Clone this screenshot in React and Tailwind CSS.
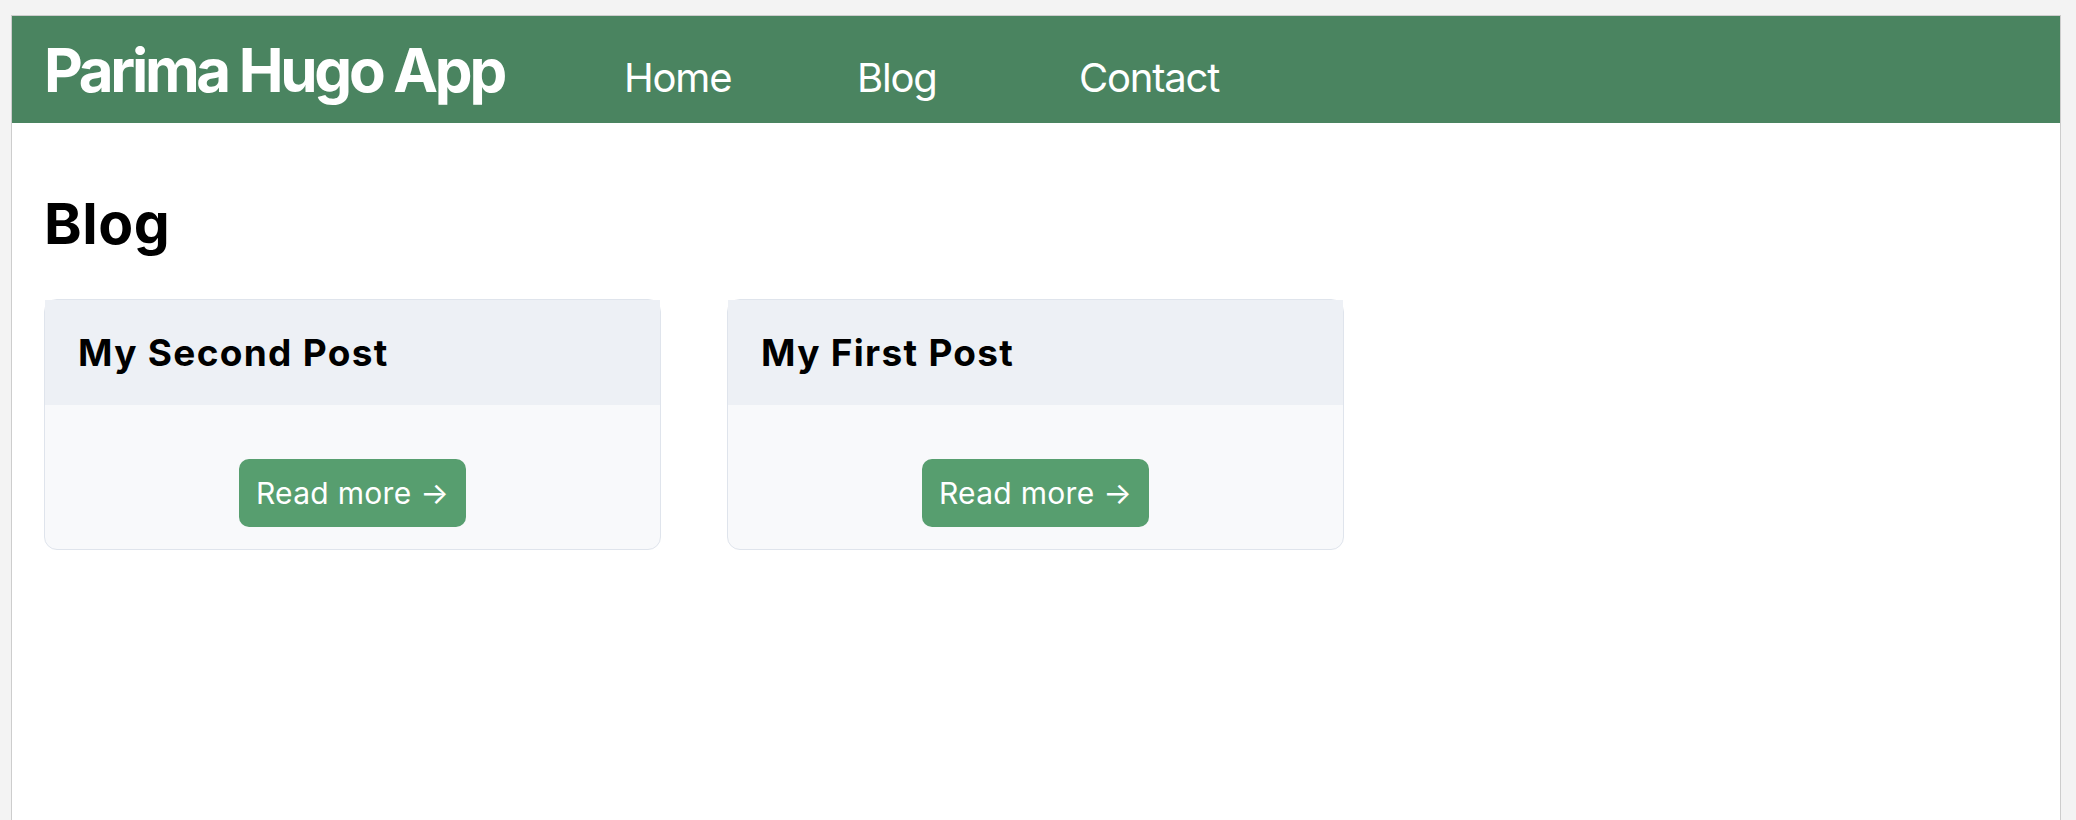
import React from 'react';

const posts = [
    { id: 2, title: 'My Second Post' },
    { id: 1, title: 'My First Post' },
];

const navLinks = [
    { label: 'Home', width: 'w-[233px]' },
    { label: 'Blog', width: 'w-[222px]' },
    { label: 'Contact', width: '' },
];

const PostCard = ({ post }) => (
    <div className="w-[617px] bg-[#f8f9fb] border border-[#dfe4ec] rounded-[13px]">
        <div className="h-[105px] flex items-center px-[33px] bg-[#edf0f5]">
            <h2 className="text-[37px] leading-none font-bold tracking-[0.035em] text-black">{post.title}</h2>
        </div>
        <div className="flex justify-center pt-[54px] pb-[22px]">
            <a href="#" className="inline-flex items-center h-[68px] px-[17px] rounded-[10px] bg-[#579e6f] text-white text-[30px] leading-none tracking-[0.01em]">
                Read more →
            </a>
        </div>
    </div>
);

export default function App() {
    return (
        <div className="min-h-screen bg-[#f3f3f3] pl-[11px] pr-[15px] pt-[15px]" style={{ fontFamily: 'Inter, "Noto Sans", sans-serif' }}>
            <div className="min-h-[805px] bg-white border-l border-r border-t border-[#cdcdcd]">
                <header className="h-[107px] flex items-center px-[32px] bg-[#4a8460]">
                    <div className="flex items-baseline">
                        <h1 className="w-[580px] text-[60px] leading-none font-bold tracking-[-0.055em] text-white">Parima Hugo App</h1>
                        <nav className="flex items-baseline">
                            {navLinks.map((link) => (
                                <a key={link.label} href="#" className={`${link.width} text-[40px] leading-none text-white tracking-[-0.03em]`}>
                                    {link.label}
                                </a>
                            ))}
                        </nav>
                    </div>
                </header>
                <main className="px-[32px] pt-[72px]">
                    <h1 className="text-[57px] leading-none font-bold tracking-[0.01em] text-black">Blog</h1>
                    <div className="flex gap-[66px] mt-[47px]">
                        {posts.map((post) => (
                            <PostCard key={post.id} post={post} />
                        ))}
                    </div>
                </main>
            </div>
        </div>
    );
}
